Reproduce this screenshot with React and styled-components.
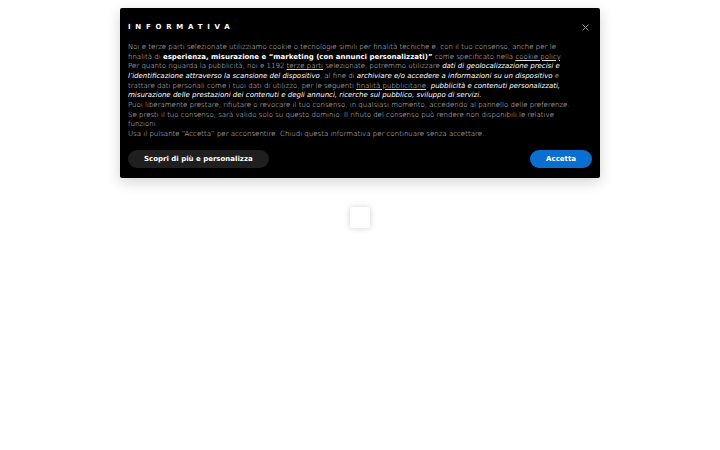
import React from "react";
import styled, { createGlobalStyle } from "styled-components";

const Global = createGlobalStyle`
  html, body { margin: 0; padding: 0; background: #fff; }
  body { font-family: "DejaVu Sans", Verdana, sans-serif; }
`;

const Page = styled.div`
  width: 720px;
  height: 450px;
  position: relative;
  display: flex;
  flex-direction: column;
  align-items: center;
`;

const Loader = styled.div`
  margin-top: 207px;
  width: 20px;
  height: 21px;
  background: #fff;
  border-radius: 2px;
  box-shadow: 0 0 6px rgba(0, 0, 0, 0.18);
`;

const Banner = styled.div`
  position: absolute;
  top: 8px;
  left: 120px;
  width: 480px;
  box-sizing: border-box;
  background: #000;
  border-radius: 2px;
  padding: 15px 8px 10px 8px;
  box-shadow: 0 4px 14px rgba(0, 0, 0, 0.18);
  color: #d4d4d4;
`;

const Title = styled.div`
  font-size: 7px;
  font-weight: bold;
  color: #fff;
  letter-spacing: 4.75px;
  line-height: 9px;
  margin-bottom: 11px;
`;

const Close = styled.button`
  position: absolute;
  top: 12px;
  right: 8px;
  width: 14px;
  height: 14px;
  padding: 0;
  border: none;
  background: transparent;
  display: flex;
  align-items: center;
  justify-content: center;
  cursor: pointer;
`;

const Text = styled.p`
  margin: 0;
  font-size: 7px;
  font-weight: 300;
  line-height: 9.65px;
  color: #dedede;
  white-space: nowrap;
`;

const B = styled.b`
  color: #fff;
  font-weight: bold;
`;

const I = styled.i`
  color: #fff;
  font-weight: 500;
  font-style: italic;
`;

const U = styled.span`
  text-decoration: underline;
`;

const Actions = styled.div`
  display: flex;
  justify-content: space-between;
  align-items: center;
  margin-top: 10px;
`;

const Btn = styled.button`
  height: 18px;
  border: none;
  border-radius: 9px;
  padding: 0 ${(p) => p.$px}px;
  font-family: "DejaVu Sans", Verdana, sans-serif;
  font-size: 7px;
  font-weight: bold;
  color: #fff;
  background: ${(p) => p.$bg};
  cursor: pointer;
`;

export default function App() {
  return (
    <Page>
      <Global />
      <Loader />
      <Banner>
        <Close aria-label="Chiudi">
          <svg width="7" height="7" viewBox="0 0 7 7">
            <path d="M0.5 0.5L6.5 6.5M6.5 0.5L0.5 6.5" stroke="#9a9a9a" strokeWidth="1" />
          </svg>
        </Close>
        <Title>INFORMATIVA</Title>
        <Text>
          Noi e terze parti selezionate utilizziamo cookie o tecnologie simili per finalità tecniche e, con il tuo consenso, anche per le
          <br />
          finalità di <B>esperienza, misurazione e “marketing (con annunci personalizzati)”</B> come specificato nella <U>cookie policy</U>.
          <br />
          Per quanto riguarda la pubblicità, noi e 1192 <U>terze parti</U> selezionate, potremmo utilizzare <I>dati di geolocalizzazione precisi e</I>
          <br />
          <I>l’identificazione attraverso la scansione del dispositivo</I>, al fine di <I>archiviare e/o accedere a informazioni su un dispositivo</I> e
          <br />
          trattare dati personali come i tuoi dati di utilizzo, per le seguenti <U>finalità pubblicitarie</U>: <I>pubblicità e contenuti personalizzati,</I>
          <br />
          <I>misurazione delle prestazioni dei contenuti e degli annunci, ricerche sul pubblico, sviluppo di servizi.</I>
          <br />
          Puoi liberamente prestare, rifiutare o revocare il tuo consenso, in qualsiasi momento, accedendo al pannello delle preferenze.
          <br />
          Se presti il tuo consenso, sarà valido solo su questo dominio. Il rifiuto del consenso può rendere non disponibili le relative
          <br />
          funzioni.
          <br />
          Usa il pulsante “Accetta” per acconsentire. Chiudi questa informativa per continuare senza accettare.
        </Text>
        <Actions>
          <Btn $bg="#1f1f1f" $px={16}>Scopri di più e personalizza</Btn>
          <Btn $bg="#0a6fcf" $px={16}>Accetta</Btn>
        </Actions>
      </Banner>
    </Page>
  );
}
